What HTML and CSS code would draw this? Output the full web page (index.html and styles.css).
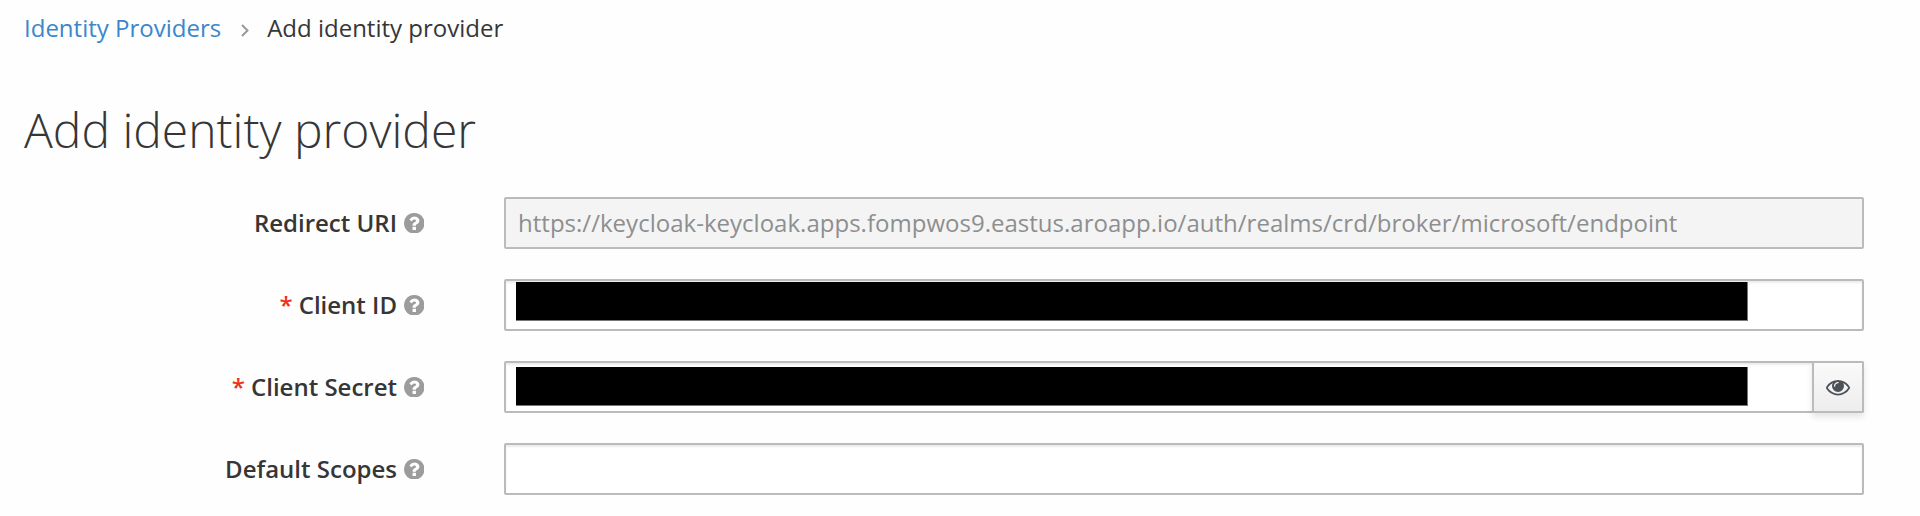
FILE: index.html
```html
<!DOCTYPE html>
<html lang="en">
<head>
<meta charset="utf-8">
<title>Add identity provider</title>
<link rel="stylesheet" href="styles.css">
</head>
<body>
<svg class="sprite" aria-hidden="true">
  <symbol id="help" viewBox="0 128 1536 1536"><path d="M896 1376v-192q0-14-9-23t-23-9h-192q-14 0-23 9t-9 23v192q0 14 9 23t23 9h192q14 0 23-9t9-23zm256-672q0-88-55.500-163t-138.500-116-170-41q-243 0-371 213-15 24 8 42l132 100q7 6 19 6 16 0 25-12 53-68 86-92 34-24 86-24 48 0 85.500 26t37.500 59q0 38-20 61t-68 45q-63 28-115.500 86.500t-52.500 125.500v36q0 14 9 23t23 9h192q14 0 23-9t9-23q0-19 21.500-49.500t54.500-49.500q32-18 49-28.500t46-35 44.500-48 28-60.500 12.500-81zm384 192q0 209-103 385.500t-279.500 279.500-385.500 103-385.500-103-279.500-279.500-103-385.500 103-385.500 279.500-279.500 385.500-103 385.500 103 279.500 279.500 103 385.500z"/></symbol>
</svg>
<nav class="crumbs"><a class="link" href="#">Identity Providers</a><svg class="chevron" viewBox="0 0 8 13"><path d="M1 1l5.500 5.500L1 12"/></svg><span class="current">Add identity provider</span></nav>
<h1 class="title">Add identity provider</h1>
<form class="form">
  <div class="row"><label class="label"><span class="text">Redirect URI</span><svg class="help"><use href="#help"/></svg></label><div class="field disabled"><span class="value">https://keycloak-keycloak.apps.fompwos9.eastus.aroapp.io/auth/realms/crd/broker/microsoft/endpoint</span></div></div>
  <div class="row"><label class="label"><span class="star">*</span><span class="text">Client ID</span><svg class="help"><use href="#help"/></svg></label><div class="field"><span class="redacted"></span></div></div>
  <div class="row"><label class="label"><span class="star">*</span><span class="text">Client Secret</span><svg class="help"><use href="#help"/></svg></label><div class="field"><span class="redacted low"></span><button class="reveal" type="button" aria-label="Show secret"><svg class="eye" viewBox="0 384 1792 1152"><path d="M1664 960q-152-236-381-353 61 104 61 225 0 185-131.500 316.500t-316.500 131.500-316.500-131.500-131.500-316.500q0-121 61-225-229 117-381 353 133 205 333.500 326.500t434.500 121.500 434.500-121.500 333.500-326.500zm-720-384q0-20-14-34t-34-14q-125 0-214.500 89.500t-89.500 214.500q0 20 14 34t34 14 34-14 14-34q0-86 61-147t147-61q20 0 34-14t14-34zm848 384q0 34-20 69-140 230-376.500 368.500t-499.500 138.500-499.500-139-376.500-368q-20-35-20-69t20-69q140-229 376.500-368t499.500-139 499.500 139 376.500 368q20 35 20 69z"/></svg></button></div></div>
  <div class="row"><label class="label"><span class="text">Default Scopes</span><svg class="help"><use href="#help"/></svg></label><div class="field"></div></div>
</form>
</body>
</html>
```
FILE: styles.css
```css
* { box-sizing: border-box; }
body { margin: 0; height: 516px; overflow: hidden; background: #fefefe; color: #363636; font-family: "Open Sans", sans-serif; font-size: 24px; }
.sprite { display: none; }
.crumbs { display: flex; align-items: center; height: 55px; padding-left: 24px; white-space: nowrap; }
.link { color: #3a87cb; text-decoration: none; }
.chevron { width: 8px; height: 13px; margin: 5px 18px 0 20px; fill: none; stroke: #999; stroke-width: 2; }
.title { margin: 40px 0 0 24px; font-size: 48px; line-height: 70px; font-weight: 300; white-space: nowrap; }
.form { padding-top: 32px; }
.row { display: flex; height: 82px; }
.label { display: flex; width: 504px; height: 52px; padding-right: 80px; align-items: center; justify-content: flex-end; font-weight: 600; white-space: nowrap; }
.text, .star { padding-bottom: 2px; }
.star { margin-right: 6px; color: #f0301f; }
.help { width: 20.500px; height: 20.500px; margin-left: 6.500px; fill: #9c9c9c; }
.field { display: flex; width: 1360px; height: 52px; border: 2px solid #bbb; border-radius: 2px; background: #fff; box-shadow: inset 0 2px 2px rgba(0,0,0,.075); }
.disabled { padding-left: 12px; align-items: center; background: #f4f4f4; color: #8d8f8f; box-shadow: none; }
.value { padding-bottom: 2px; letter-spacing: .016px; white-space: nowrap; }
.redacted { width: 1232px; height: 39px; margin: 1px 0 0 10px; border: solid #777; border-width: 0 1px 1px 0; background: #000; }
.low { margin-top: 4px; }
.reveal { display: flex; width: 52px; height: 52px; margin: -2px -2px 0 auto; padding: 2px 0 0; align-items: center; justify-content: center; border: 2px solid #bbb; border-radius: 0 2px 2px 0; background: linear-gradient(#fafafa, #ededed); box-shadow: 0 4px 6px rgba(3,3,3,.1); }
.eye { width: 24px; height: 15.430px; fill: #4d5258; }
```
